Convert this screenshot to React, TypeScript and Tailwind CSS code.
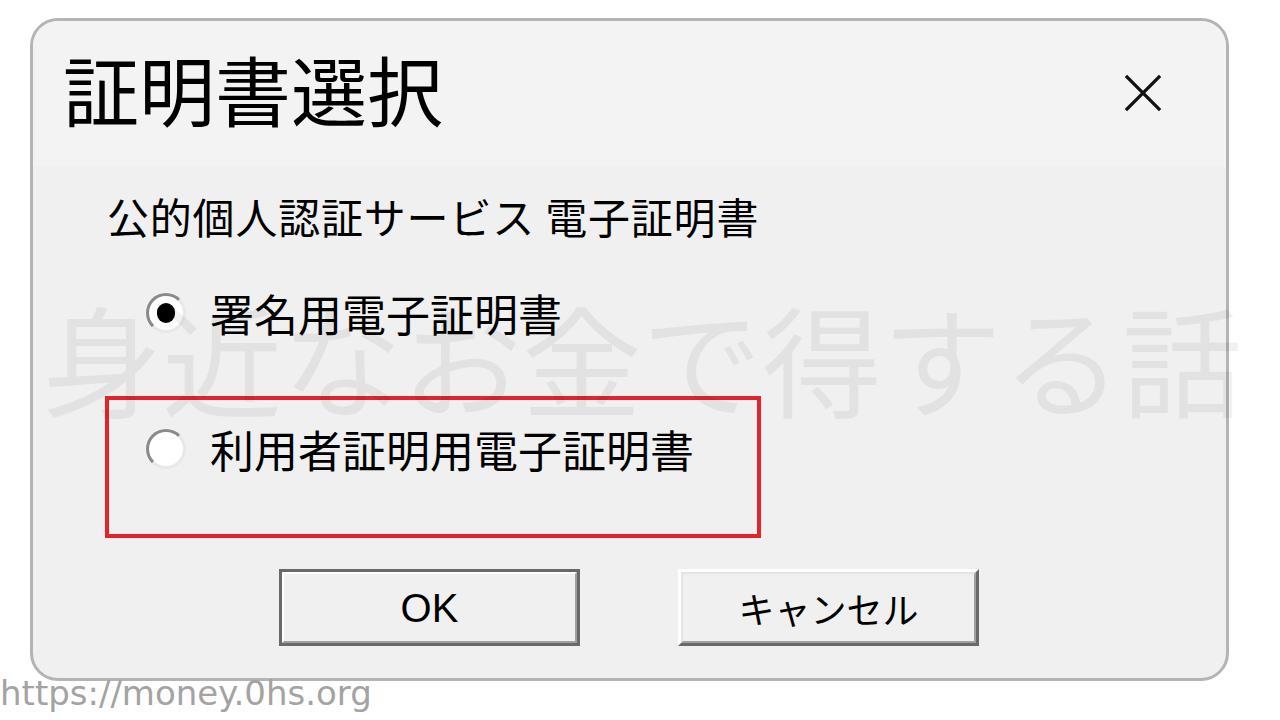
import { useState } from "react";

const jp = "font-['MS_UI_Gothic','Noto_Sans_CJK_JP',sans-serif]";

function Radio({ checked }: { checked: boolean }) {
  return (
    <span className="flex h-[40px] w-[40px] items-center justify-center rounded-full border-[3px] border-t-[#8a8a8a] border-l-[#8a8a8a] border-r-[#e8e8e8] border-b-[#e8e8e8] bg-white">
      {checked && <span className="h-[20px] w-[18px] rounded-full bg-black" />}
    </span>
  );
}

export default function App() {
  const [choice, setChoice] = useState("sign");

  return (
    <div className="relative h-[720px] w-[1280px] overflow-hidden bg-white">
      <div className="absolute left-[30px] top-[18px] flex h-[663px] w-[1199px] flex-col overflow-hidden rounded-[28px] border-[3px] border-[#b4b4b4] bg-[#f0f0f0]">
        {/* title */}
        <div className="flex h-[145px] items-start justify-between bg-[#f3f3f3] pl-[30px] pr-[64px] pt-[27px]">
          <h1 className={`${jp} text-[76px] leading-[80px] text-black`}>証明書選択</h1>
          <svg width="38" height="38" viewBox="0 0 40 40" className="mt-[26px]">
            <path d="M2 2 L38 38 M38 2 L2 38" stroke="#111" strokeWidth="3.5" />
          </svg>
        </div>

        {/* body */}
        <div className="flex-1">
          <div className="pl-[74px] pt-[27px]">
            <p className={`${jp} text-[42px] leading-[46px] tracking-[0.8px] text-black`}>公的個人認証サービス 電子証明書</p>

            <label
              className="mt-[50px] flex cursor-pointer items-center gap-[24px] pl-[39px]"
              onClick={() => setChoice("sign")}
            >
              <Radio checked={choice === "sign"} />
              <span className={`${jp} text-[44px] leading-[48px] text-black`}>署名用電子証明書</span>
            </label>

            <div className="ml-[-2px] mt-[59px] h-[142px] w-[656px] border-[4px] border-[#e3242b] pl-[37px] pt-[25px]">
              <label className="flex cursor-pointer items-center gap-[24px]" onClick={() => setChoice("user")}>
                <Radio checked={choice === "user"} />
                <span className={`${jp} text-[44px] leading-[48px] text-black`}>利用者証明用電子証明書</span>
              </label>
            </div>
          </div>

          <div className="mt-[31px] flex gap-[98px] pl-[246px]">
            <button
              type="button"
              className="h-[77px] w-[301px] border-[3px] border-[#696969] bg-[#f0f0f0]"
            >
              <span className="flex h-full w-full items-center justify-center border-[2px] border-t-white border-l-white border-r-[#a0a0a0] border-b-[#a0a0a0]">
                <span className="font-['Liberation_Sans',sans-serif] text-[40px] leading-none text-black">OK</span>
              </span>
            </button>
            <button
              type="button"
              className="h-[77px] w-[301px] border-[3px] border-t-white border-l-white border-r-[#696969] border-b-[#696969] bg-[#f0f0f0]"
            >
              <span className="flex h-full w-full items-center justify-center border-[2px] border-t-[#e3e3e3] border-l-[#e3e3e3] border-r-[#a0a0a0] border-b-[#a0a0a0]">
                <span className={`${jp} text-[36px] leading-none text-black`}>キャンセル</span>
              </span>
            </button>
          </div>
        </div>
      </div>

      {/* watermark over the dialog */}
      <div
        className={`${jp} pointer-events-none absolute left-[42px] top-[292px] whitespace-nowrap text-[120px] leading-[130px] text-[rgba(0,0,0,0.055)]`}
      >
        身近なお金で得する話
      </div>

      <div className="absolute left-0 top-[672px] font-['DejaVu_Sans',sans-serif] text-[34px] leading-[42px] text-[#a3a3a3]">
        https://money.0hs.org
      </div>
    </div>
  );
}
